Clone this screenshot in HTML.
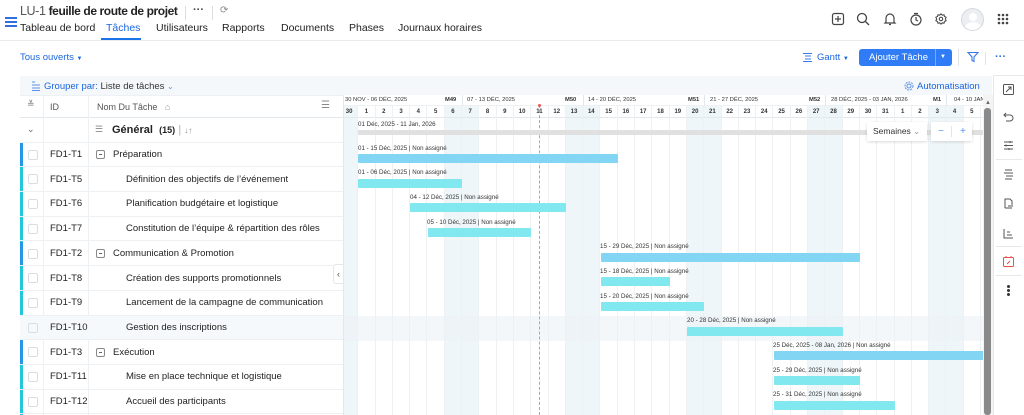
<!DOCTYPE html>
<html><head><meta charset="utf-8"><style>
*{box-sizing:border-box;margin:0;padding:0}
body{width:1024px;height:415px;overflow:hidden;background:#fff;font-family:"Liberation Sans",sans-serif;color:#222;position:relative}
.a{position:absolute;white-space:nowrap}
.tab{position:absolute;top:22px;font-size:10.5px;color:#222;white-space:nowrap}
.row{position:absolute;left:20px;width:323px;height:24.7px;border-bottom:1px solid #eef1f4;font-size:9.5px;display:flex;align-items:center;white-space:nowrap}
.cb{position:absolute;left:8px;top:7px;width:10px;height:10px;border:1px solid #d8dde2;border-radius:2px}
.id{position:absolute;left:30px}
.nm{position:absolute;left:106px}
.pn{position:absolute;left:76px;display:flex;align-items:center}
.pn i{display:inline-block;width:9px;height:9px;border:1px solid #888;border-radius:2px;margin-right:8px;position:relative}
.pn i:after{content:"";position:absolute;left:2px;top:3px;width:3px;height:1px;background:#666}
.days{position:absolute;left:-3px;display:flex}
.days span{width:17.3px;flex:none;text-align:center;border-right:1px solid #eef1f4}
.bl{position:absolute;font-size:6.2px;color:#333;white-space:nowrap}
.bar{position:absolute;height:9px;border-radius:1px}
.p{background:#82d5f3}.c{background:#80e8ee}
</style></head><body>
<div class="a" style="left:5px;top:17px;width:12px;height:2px;background:#2f6fe0;box-shadow:0 4px 0 #2f6fe0,0 8px 0 #2f6fe0"></div>
<div class="a" style="left:20px;top:4px;font-size:12.5px;letter-spacing:-0.4px"><span style="color:#555">LU-1</span> <b style="color:#222;font-size:12px">feuille de route de projet</b></div>
<div class="a" style="left:185px;top:6px;width:1px;height:14px;background:#ddd"></div>
<div class="a" style="left:193px;top:4px;font-size:11px;color:#444;font-weight:bold">···</div>
<div class="a" style="left:212px;top:6px;width:1px;height:14px;background:#ddd"></div>
<div class="a" style="left:220px;top:5px;font-size:10px;color:#888">⟳</div>
<div class="tab" style="left:20px">Tableau de bord</div>
<div class="tab" style="left:106px;color:#1a66e0">Tâches</div>
<div class="a" style="left:101px;top:38px;width:40px;height:2px;background:#1a73e8"></div>
<div class="tab" style="left:156px">Utilisateurs</div>
<div class="tab" style="left:222px">Rapports</div>
<div class="tab" style="left:281px">Documents</div>
<div class="tab" style="left:349px">Phases</div>
<div class="tab" style="left:398px">Journaux horaires</div>
<div class="a" style="left:0;top:40px;width:1024px;height:1px;background:#e8ecef"></div>
<svg class="a" style="left:831px;top:12px" width="14" height="14" viewBox="0 0 14 14" fill="none" stroke="#444" stroke-width="1.2"><rect x="1.5" y="1.5" width="11" height="11" rx="2"/><path d="M7 4v6M4 7h6"/></svg>
<svg class="a" style="left:856px;top:12px" width="14" height="14" viewBox="0 0 14 14" fill="none" stroke="#444" stroke-width="1.3"><circle cx="6" cy="6" r="4.5"/><path d="M9.5 9.5L13 13"/></svg>
<svg class="a" style="left:883px;top:12px" width="14" height="14" viewBox="0 0 14 14" fill="none" stroke="#444" stroke-width="1.2"><path d="M3 10V6a4 4 0 018 0v4l1 1H2zM6 12.5h2"/></svg>
<svg class="a" style="left:909px;top:12px" width="14" height="14" viewBox="0 0 14 14" fill="none" stroke="#444" stroke-width="1.2"><circle cx="7" cy="8" r="5"/><path d="M7 5v3l2 1M5 1.5h4"/></svg>
<svg class="a" style="left:935px;top:13px" width="12" height="12" viewBox="0 0 14 14" fill="none" stroke="#444" stroke-width="1.2"><circle cx="7" cy="7" r="2"/><path d="M7 1l1.5 1.5 2-.5.5 2 2 1-1 2 1 2-2 1-.5 2-2-.5L7 13l-1.5-1.5-2 .5-.5-2-2-1 1-2-1-2 2-1 .5-2 2 .5z"/></svg>
<div class="a" style="left:961px;top:8px;width:23px;height:23px;border-radius:50%;background:#eceef2;border:1px solid #d5d8de;overflow:hidden"><div class="a" style="left:7px;top:4px;width:8px;height:8px;border-radius:50%;background:#fff"></div><div class="a" style="left:3px;top:13px;width:16px;height:12px;border-radius:50%;background:#fff"></div></div>
<svg class="a" style="left:997px;top:13px" width="12" height="12" viewBox="0 0 12 12" fill="#444"><circle cx="2" cy="2" r="1.3"/><circle cx="6" cy="2" r="1.3"/><circle cx="10" cy="2" r="1.3"/><circle cx="2" cy="6" r="1.3"/><circle cx="6" cy="6" r="1.3"/><circle cx="10" cy="6" r="1.3"/><circle cx="2" cy="10" r="1.3"/><circle cx="6" cy="10" r="1.3"/><circle cx="10" cy="10" r="1.3"/></svg>
<div class="a" style="left:20px;top:52px;font-size:9.5px;color:#1a66e0">Tous ouverts <span style="font-size:6px">▼</span></div>
<svg class="a" style="left:802px;top:52px" width="11" height="11" viewBox="0 0 11 11" stroke="#3b7be8" stroke-width="1"><path d="M1 1.5h9M3 4h6M3 7h6M1 9.5h9"/></svg>
<div class="a" style="left:817px;top:52px;font-size:9.5px;color:#1a66e0">Gantt <span style="font-size:6px">▼</span></div>
<div class="a" style="left:859px;top:49px;width:93px;height:17px;background:#2f7cf6;border-radius:3px"></div>
<div class="a" style="left:869px;top:52px;font-size:9.5px;color:#fff">Ajouter Tâche</div>
<div class="a" style="left:935px;top:49px;width:1px;height:17px;background:#7aaaf8"></div>
<div class="a" style="left:940px;top:54px;font-size:6px;color:#fff">▼</div>
<div class="a" style="left:958px;top:49px;width:1px;height:17px;background:#e2e5e8"></div>
<svg class="a" style="left:967px;top:51px" width="12" height="12" viewBox="0 0 12 12" fill="none" stroke="#3b7be8" stroke-width="1.1"><path d="M1 1.5h10L7 6v4.5L5 9.5V6z"/></svg>
<div class="a" style="left:985px;top:52px;width:1px;height:13px;background:#e2e5e8"></div>
<div class="a" style="left:995px;top:51px;font-size:11px;color:#2f6fe0;font-weight:bold">···</div>
<div class="a" style="left:20px;top:76px;width:972px;height:19px;background:#f5f8fa"></div>
<svg class="a" style="left:31px;top:81px" width="10" height="10" viewBox="0 0 10 10" stroke="#5b8fe6" fill="none"><path d="M1 1h3M1 4h8M1 7h8M1 9.5h8"/></svg>
<div class="a" style="left:44px;top:81px;font-size:9.5px;color:#1a66e0">Grouper par: <span style="color:#333">Liste de tâches</span> <span style="color:#5b8fe6;font-size:8px">⌄</span></div>
<svg class="a" style="left:904px;top:81px" width="10" height="10" viewBox="0 0 10 10" fill="none" stroke="#5b8fe6"><circle cx="5" cy="5" r="2"/><circle cx="5" cy="5" r="4" stroke-dasharray="2 1"/></svg>
<div class="a" style="left:917px;top:81px;font-size:9.5px;color:#1a66e0">Automatisation</div>
<div class="a" style="left:20px;top:95px;width:323px;height:23px;border-bottom:1px solid #e3e8ec;border-top:1px solid #eef1f4"></div>
<div class="a" style="left:27px;top:99px;font-size:9px;color:#777">≚</div>
<div class="a" style="left:50px;top:102px;font-size:9px;color:#555">ID</div>
<div class="a" style="left:97px;top:102px;font-size:9px;color:#555">Nom Du Tâche &nbsp;&nbsp;<span style="color:#999">⌂</span></div>
<div class="a" style="left:321px;top:100px;font-size:10px;color:#888">☰</div>
<div class="a" style="left:43px;top:95px;width:1px;height:320px;background:#eef1f4"></div>
<div class="a" style="left:88px;top:95px;width:1px;height:320px;background:#eef1f4"></div>
<div class="a" style="left:343px;top:95px;width:1px;height:320px;background:#e3e8ec"></div>
<div class="row" style="top:118px"><span class="a" style="left:7px;font-size:9px;color:#666">⌄</span><span class="a" style="left:75px;color:#888;font-size:9px">☰</span><span class="a" style="left:92px;font-size:11px;font-weight:600">Général &nbsp;<b style="font-size:9px">(15)</b> <span style="color:#ccc">|</span> <span style="font-size:8px;color:#888">↓↑</span></span></div>
<div class="a" style="left:20px;top:142.7px;width:3px;height:272px;background:#22c7d9"></div>
<div class="a" style="left:20px;top:142.7px;width:3px;height:24.7px;background:#2596e8"></div>
<div class="a" style="left:20px;top:241.5px;width:3px;height:24.7px;background:#2596e8"></div>
<div class="a" style="left:20px;top:340.3px;width:3px;height:24.7px;background:#2596e8"></div>
<div class="row" style="top:142.7px"><i class="cb"></i><span class="id">FD1-T1</span><span class="pn"><i></i>Préparation</span></div>
<div class="row" style="top:167.4px"><i class="cb"></i><span class="id">FD1-T5</span><span class="nm">Définition des objectifs de l’événement</span></div>
<div class="row" style="top:192.1px"><i class="cb"></i><span class="id">FD1-T6</span><span class="nm">Planification budgétaire et logistique</span></div>
<div class="row" style="top:216.8px"><i class="cb"></i><span class="id">FD1-T7</span><span class="nm">Constitution de l’équipe &amp; répartition des rôles</span></div>
<div class="row" style="top:241.5px"><i class="cb"></i><span class="id">FD1-T2</span><span class="pn"><i></i>Communication &amp; Promotion</span></div>
<div class="row" style="top:266.2px"><i class="cb"></i><span class="id">FD1-T8</span><span class="nm">Création des supports promotionnels</span></div>
<div class="row" style="top:290.9px"><i class="cb"></i><span class="id">FD1-T9</span><span class="nm">Lancement de la campagne de communication</span></div>
<div class="row" style="top:315.6px;background:#f6f9fb"><i class="cb"></i><span class="id">FD1-T10</span><span class="nm">Gestion des inscriptions</span></div>
<div class="row" style="top:340.3px"><i class="cb"></i><span class="id">FD1-T3</span><span class="pn"><i></i>Exécution</span></div>
<div class="row" style="top:365px"><i class="cb"></i><span class="id">FD1-T11</span><span class="nm">Mise en place technique et logistique</span></div>
<div class="row" style="top:389.7px"><i class="cb"></i><span class="id">FD1-T12</span><span class="nm">Accueil des participants</span></div>
<div class="a" style="left:333px;top:264px;width:10px;height:20px;background:#fff;border:1px solid #e3e6ea;border-right:none;border-radius:3px 0 0 3px;font-size:9px;color:#555;text-align:center;line-height:18px">‹</div>
<div class="a" style="left:344px;top:95px;width:639px;height:320px;overflow:hidden">
 <div class="days" style="top:0;height:320px">
  <span style="background:#eff6f9"></span><span></span><span></span><span></span><span></span><span></span><span style="background:#eff6f9"></span><span style="background:#eff6f9"></span><span></span><span></span><span></span><span></span><span></span><span style="background:#eff6f9"></span><span style="background:#eff6f9"></span><span></span><span></span><span></span><span></span><span></span><span style="background:#eff6f9"></span><span style="background:#eff6f9"></span><span></span><span></span><span></span><span></span><span></span><span style="background:#eff6f9"></span><span style="background:#eff6f9"></span><span></span><span></span><span></span><span></span><span></span><span style="background:#eff6f9"></span><span style="background:#eff6f9"></span><span></span><span></span>
 </div>
 <div class="a" style="left:0;top:0;width:639px;height:11px;background:#fff;border-bottom:1px solid #eef1f4"></div>
 <div class="a" style="left:0;top:11px;width:639px;height:12px;border-bottom:1px solid #e3e8ec"></div>
 <div class="days" style="top:11px;height:12px;font-size:6px;line-height:12px;color:#333;font-weight:bold">
  <span>30</span><span>1</span><span>2</span><span>3</span><span>4</span><span>5</span><span>6</span><span>7</span><span>8</span><span>9</span><span>10</span><span>11</span><span>12</span><span>13</span><span>14</span><span>15</span><span>16</span><span>17</span><span>18</span><span>19</span><span>20</span><span>21</span><span>22</span><span>23</span><span>24</span><span>25</span><span>26</span><span>27</span><span>28</span><span>29</span><span>30</span><span>31</span><span>1</span><span>2</span><span>3</span><span>4</span><span>5</span><span>6</span>
 </div>
 <div style="font-size:5.8px;color:#333;line-height:11px">
  <span class="a" style="left:1px;top:0">30 NOV - 06 DÉC, 2025</span><b class="a" style="left:101px;top:0">M49</b><span class="a" style="left:123px;top:0">07 - 13 DÉC, 2025</span>
  <b class="a" style="left:221px;top:0">M50</b><span class="a" style="left:244px;top:0">14 - 20 DÉC, 2025</span>
  <b class="a" style="left:344px;top:0">M51</b><span class="a" style="left:366px;top:0">21 - 27 DÉC, 2025</span>
  <b class="a" style="left:465px;top:0">M52</b><span class="a" style="left:487px;top:0">28 DÉC, 2025 - 03 JAN, 2026</span>
  <b class="a" style="left:589px;top:0">M1</b><span class="a" style="left:610px;top:0">04 - 10 JAN,</span>
 </div>
 <div class="a" style="left:118px;top:0;width:1px;height:11px;background:#e3e8ec"></div>
 <div class="a" style="left:239px;top:0;width:1px;height:11px;background:#e3e8ec"></div>
 <div class="a" style="left:360px;top:0;width:1px;height:11px;background:#e3e8ec"></div>
 <div class="a" style="left:481px;top:0;width:1px;height:11px;background:#e3e8ec"></div>
 <div class="a" style="left:602px;top:0;width:1px;height:11px;background:#e3e8ec"></div>
 <div class="a" style="left:0;top:221px;width:639px;height:24.7px;background:rgba(236,242,246,.6)"></div>
 <div class="a" style="left:195px;top:10px;height:310px;border-left:1px dashed #f08a8a"></div>
 <div class="a" style="left:194px;top:9px;width:3px;height:3px;background:#e55;border-radius:50%"></div>
 <div style="position:absolute;left:0;top:23px;width:639px;height:297px">
  <span class="bl" style="left:14px;top:3px">01 Déc, 2025 - 11 Jan, 2026</span>
  <div class="a" style="left:14px;top:12px;width:625px;height:5px;background:#e0e0e0"></div>
  <span class="bl" style="left:14px;top:27px">01 - 15 Déc, 2025 | Non assigné</span><div class="bar p" style="left:14.3px;top:36px;width:259.5px"></div>
  <span class="bl" style="left:14px;top:51px">01 - 06 Déc, 2025 | Non assigné</span><div class="bar c" style="left:14.3px;top:61px;width:103.8px"></div>
  <span class="bl" style="left:66px;top:76px">04 - 12 Déc, 2025 | Non assigné</span><div class="bar c" style="left:66.2px;top:85px;width:155.7px"></div>
  <span class="bl" style="left:83px;top:101px">05 - 10 Déc, 2025 | Non assigné</span><div class="bar c" style="left:83.5px;top:110px;width:103.8px"></div>
  <span class="bl" style="left:256px;top:125px">15 - 29 Déc, 2025 | Non assigné</span><div class="bar p" style="left:256.5px;top:135px;width:259.5px"></div>
  <span class="bl" style="left:256px;top:150px">15 - 18 Déc, 2025 | Non assigné</span><div class="bar c" style="left:256.5px;top:159px;width:69.2px"></div>
  <span class="bl" style="left:256px;top:175px">15 - 20 Déc, 2025 | Non assigné</span><div class="bar c" style="left:256.5px;top:184px;width:103.8px"></div>
  <span class="bl" style="left:343px;top:199px">20 - 28 Déc, 2025 | Non assigné</span><div class="bar c" style="left:343px;top:209px;width:155.7px"></div>
  <span class="bl" style="left:429px;top:224px">25 Déc, 2025 - 08 Jan, 2026 | Non assigné</span><div class="bar p" style="left:429.5px;top:233px;width:210px"></div>
  <span class="bl" style="left:429px;top:249px">25 - 29 Déc, 2025 | Non assigné</span><div class="bar c" style="left:429.5px;top:258px;width:86.5px"></div>
  <span class="bl" style="left:429px;top:273px">25 - 31 Déc, 2025 | Non assigné</span><div class="bar c" style="left:429.5px;top:283px;width:121.1px"></div>
 </div>
</div>
<div class="a" style="left:867px;top:122px;width:60px;height:19px;background:#fff;box-shadow:0 1px 3px rgba(0,0,0,.15);font-size:8.5px;line-height:19px;padding-left:6px;color:#333">Semaines <span style="color:#999">⌄</span></div>
<div class="a" style="left:931px;top:122px;width:41px;height:19px;background:#fff;box-shadow:0 1px 3px rgba(0,0,0,.15);font-size:10px;line-height:19px;color:#5b8fe6"><span class="a" style="left:7px">−</span><span class="a" style="left:20px;top:4px;width:1px;height:11px;background:#e5e5e5"></span><span class="a" style="left:29px">+</span></div>
<div class="a" style="left:983px;top:95px;width:10px;height:320px;background:#f4f4f4"></div>
<div class="a" style="left:985px;top:100px;font-size:6px;color:#666">▲</div>
<div class="a" style="left:984px;top:108px;width:7px;height:307px;background:#8a8a8a;border-radius:3px"></div>
<div class="a" style="left:993px;top:75px;width:31px;height:340px;background:#fff;border-left:1px solid #e6e9ec;border-top:1px solid #e6e9ec"></div>
<div class="a" style="left:996px;top:159px;width:26px;height:1px;background:#e6e9ec"></div>
<div class="a" style="left:996px;top:246px;width:26px;height:1px;background:#e6e9ec"></div>
<div class="a" style="left:996px;top:275px;width:26px;height:1px;background:#e6e9ec"></div>
<svg class="a" style="left:1003px;top:84px" width="11" height="11" viewBox="0 0 11 11" fill="none" stroke="#555"><rect x=".5" y=".5" width="10" height="10" rx="1"/><path d="M3 8l5-5M5 3h3v3"/></svg>
<svg class="a" style="left:1003px;top:112px" width="11" height="10" viewBox="0 0 11 10" fill="none" stroke="#555"><path d="M3 1L1 3l2 2M1 3h6a3 3 0 010 6H3"/></svg>
<svg class="a" style="left:1003px;top:140px" width="11" height="11" viewBox="0 0 11 11" fill="none" stroke="#555"><path d="M1 2h9M1 5.5h9M1 9h9M7 1v2M3 4.5v2M6 8v2"/></svg>
<svg class="a" style="left:1003px;top:169px" width="11" height="11" viewBox="0 0 11 11" fill="none" stroke="#555"><path d="M2 1h7M1 4h9M3 7h7M2 10h7"/></svg>
<svg class="a" style="left:1003px;top:198px" width="11" height="11" viewBox="0 0 11 11" fill="none" stroke="#555"><path d="M2 10V1h5l2 2v4M2 10h7M5 8h5"/></svg>
<svg class="a" style="left:1003px;top:228px" width="11" height="11" viewBox="0 0 11 11" fill="none" stroke="#555"><path d="M1 1v9h9M4 4h3M4 7h5"/></svg>
<svg class="a" style="left:1003px;top:256px" width="11" height="11" viewBox="0 0 11 11" fill="none" stroke="#e5534b"><rect x=".5" y="1.5" width="10" height="9" rx="1"/><path d="M4 8l3-3M3 0v2M8 0v2"/></svg>
<div class="a" style="left:1007px;top:285px;width:3px;height:3px;border-radius:50%;background:#333;box-shadow:0 4px 0 #333,0 8px 0 #333"></div>
</body></html>
